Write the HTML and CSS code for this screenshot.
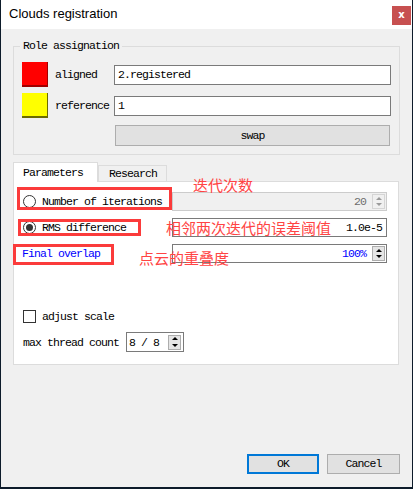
FILE: index.html
```html
<!DOCTYPE html>
<html lang="en">
<head>
  <meta charset="UTF-8" />
  <title>Clouds registration</title>
  <link rel="stylesheet" href="styles.css">
</head>
<body>
  <div class="window">
    <div class="titlebar">
      <span class="title">Clouds registration</span>
      <span class="close">x</span>
    </div>

    <div class="content">
      <fieldset class="group">
        <legend>Role assignation</legend>
        <div class="roles">
          <span class="swatch red"></span>
          <span class="label">aligned</span>
          <div class="field">2.registered</div>

          <span class="swatch yellow"></span>
          <span class="label">reference</span>
          <div class="field">1</div>

          <div class="btn swap">swap</div>
        </div>
      </fieldset>

      <div class="tabbar">
        <div class="tab active">Parameters</div>
        <div class="tab">Research</div>
      </div>
      <div class="panel">
        <div class="opt">
          <div class="opt-label"><span class="radio"></span>Number of iterations</div>
          <div class="spin disabled">
            <span class="val">20</span>
            <span class="arrows"><i class="up"></i><i class="down"></i></span>
          </div>
        </div>
        <div class="opt">
          <div class="opt-label"><span class="radio checked"></span>RMS difference</div>
          <div class="spin plain"><span class="val">1.0e-5</span></div>
        </div>
        <div class="opt">
          <div class="opt-label blue">Final overlap</div>
          <div class="spin">
            <span class="val blue">100%</span>
            <span class="arrows"><i class="up"></i><i class="down"></i></span>
          </div>
        </div>

        <div class="check-row"><span class="checkbox"></span>adjust scale</div>
        <div class="thread-row">
          <span>max thread count</span>
          <div class="spin small">
            <span class="val">8 / 8</span>
            <span class="arrows"><i class="up"></i><i class="down"></i></span>
          </div>
        </div>
      </div>

      <div class="buttons">
        <div class="btn ok">OK</div>
        <div class="btn">Cancel</div>
      </div>
    </div>

    <div class="mark box1"></div>
    <div class="mark box2"></div>
    <div class="mark box3"></div>
    <div class="note note1">迭代次数</div>
    <div class="note note2">相邻两次迭代的误差阈值</div>
    <div class="note note3">点云的重叠度</div>
  </div>
</body>
</html>
```

FILE: styles.css
```css
body {
  margin: 0;
  width: 413px;
  height: 489px;
  overflow: hidden;
  background: #0d1b2a;
}
.window {
  position: relative;
  margin-left: 1px;
  width: 411px;
  height: 487px;
  background: #f0f0f0;
  display: flex;
  flex-direction: column;
  font-family: 'Liberation Mono', monospace;
  font-size: 11.5px;
  letter-spacing: -0.9px;
  color: #000;
}
.titlebar {
  height: 29px;
  background: #fff;
  display: flex;
  align-items: flex-start;
}
.title {
  font-family: 'Liberation Sans', Arial, sans-serif;
  font-size: 13px;
  letter-spacing: 0;
  line-height: 28px;
  padding-left: 8px;
}
.close {
  margin: 6px 1px 0 auto;
  width: 19px;
  height: 19px;
  background: #c75050;
  color: #fff;
  font-family: 'DejaVu Sans', sans-serif;
  font-weight: bold;
  font-size: 10px;
  letter-spacing: 0;
  line-height: 18px;
  text-align: center;
}
.content {
  flex: 1;
  display: flex;
  flex-direction: column;
  padding: 0 12px 13px;
}

.group {
  margin: 11px 0 0;
  padding: 10px 8px 8px;
  border: 1px solid #dcdcdc;
  min-width: 0;
}
.group legend {
  padding: 0 3px;
  margin-left: -2px;
  line-height: 12px;
}
.roles {
  display: grid;
  grid-template-columns: 26px 66px 1fr;
  row-gap: 6px;
  align-items: center;
}
.swatch {
  width: 26px;
  height: 25px;
  box-sizing: border-box;
}
.swatch.red {
  background: #ff0000;
  border-right: 1px solid #a00000;
  border-bottom: 2px solid #a00000;
}
.swatch.yellow {
  background: #ffff00;
  border-right: 1px solid #6b6b00;
  border-bottom: 2px solid #6b6b00;
}
.label {
  padding-left: 7px;
}
.field {
  height: 20px;
  box-sizing: border-box;
  border: 1px solid #7a7a7a;
  background: #fff;
  padding-left: 3px;
  line-height: 18px;
}
.btn {
  height: 20px;
  box-sizing: border-box;
  border: 1px solid #adadad;
  background: #e1e1e1;
  text-align: center;
  line-height: 18px;
}
.swap {
  grid-column: 3;
  margin: 1px 1px 0;
  height: 21px;
  line-height: 19px;
}

.tabbar {
  display: flex;
  align-items: flex-end;
  margin: 7px 1px 0 0;
  height: 19px;
}
.tab {
  box-sizing: border-box;
  height: 16px;
  border: 1px solid #dcdcdc;
  border-bottom: none;
  padding: 0 9px 0 10px;
  line-height: 15px;
}
.tab.active {
  position: relative;
  height: 20px;
  margin-bottom: -1px;
  background: #fff;
  padding: 0 14px 0 9px;
  line-height: 19px;
}
.panel {
  height: 184px;
  box-sizing: border-box;
  margin-right: 1px;
  border: 1px solid #dcdcdc;
  background: #fff;
  padding: 10px 11px 12px 8px;
  display: flex;
  flex-direction: column;
}
.opt {
  display: flex;
  align-items: center;
  height: 19px;
}
.opt + .opt {
  margin-top: 7px;
}
.opt-label {
  width: 150px;
  display: flex;
  align-items: center;
}
.blue {
  color: #0000ff;
}
.radio {
  width: 13px;
  height: 13px;
  box-sizing: border-box;
  border: 1px solid #333;
  border-radius: 50%;
  margin: 0 6px 0 1px;
  display: flex;
  align-items: center;
  justify-content: center;
}
.radio.checked::after {
  content: '';
  width: 7px;
  height: 7px;
  border-radius: 50%;
  background: #333;
}
.spin {
  width: 215px;
  height: 19px;
  box-sizing: border-box;
  border: 1px solid #7a7a7a;
  background: #fff;
  display: flex;
  align-items: center;
  justify-content: flex-end;
  padding-right: 1px;
}
.spin.disabled {
  border-color: #cccccc;
  background: #f0f0f0;
  color: #6d6d6d;
}
.spin.plain {
  padding-right: 4px;
}
.val {
  margin-right: 6px;
}
.plain .val {
  margin-right: 0;
}
.arrows {
  width: 13px;
  height: 15px;
  box-sizing: border-box;
  border: 1px solid #adadad;
  background: #e5e5e5;
  display: flex;
  flex-direction: column;
  align-items: center;
  justify-content: space-around;
}
.disabled .arrows {
  border-color: #d5d5d5;
  background: #f0f0f0;
}
.arrows i {
  width: 0;
  height: 0;
  border-left: 3px solid transparent;
  border-right: 3px solid transparent;
}
.arrows .up {
  border-bottom: 3px solid #000;
}
.arrows .down {
  border-top: 3px solid #000;
}
.disabled .arrows .up {
  border-bottom-color: #9a9a9a;
}
.disabled .arrows .down {
  border-top-color: #9a9a9a;
}

.check-row {
  margin-top: auto;
  display: flex;
  align-items: center;
  height: 13px;
}
.checkbox {
  width: 13px;
  height: 13px;
  box-sizing: border-box;
  border: 1px solid #333;
  margin: 0 6px 0 1px;
}
.thread-row {
  margin-top: 9px;
  display: flex;
  align-items: center;
  padding-left: 1px;
}
.spin.small {
  width: 58px;
  height: 20px;
  margin-left: 7px;
  justify-content: space-between;
  padding: 0 2px 0 2px;
}

.buttons {
  margin-top: auto;
  display: flex;
  justify-content: flex-end;
  gap: 8px;
}
.buttons .btn {
  width: 73px;
}
.buttons .btn.ok {
  width: 72px;
  border: 2px solid #0078d7;
  line-height: 16px;
}

.mark {
  position: absolute;
  box-sizing: border-box;
  border: 3px solid #fb3b3b;
}
.box1 { left: 16px; top: 187px; width: 155px; height: 23px; }
.box2 { left: 17px; top: 219px; width: 123px; height: 17px; }
.box3 { left: 12px; top: 244px; width: 101px; height: 21px; }
.note {
  position: absolute;
  font-family: 'Noto Sans CJK SC', sans-serif;
  font-size: 15px;
  letter-spacing: 0;
  line-height: 16px;
  color: #ff4444;
}
.note1 { left: 192px; top: 177px; }
.note2 { left: 165px; top: 220px; }
.note3 { left: 138px; top: 250px; }
```
